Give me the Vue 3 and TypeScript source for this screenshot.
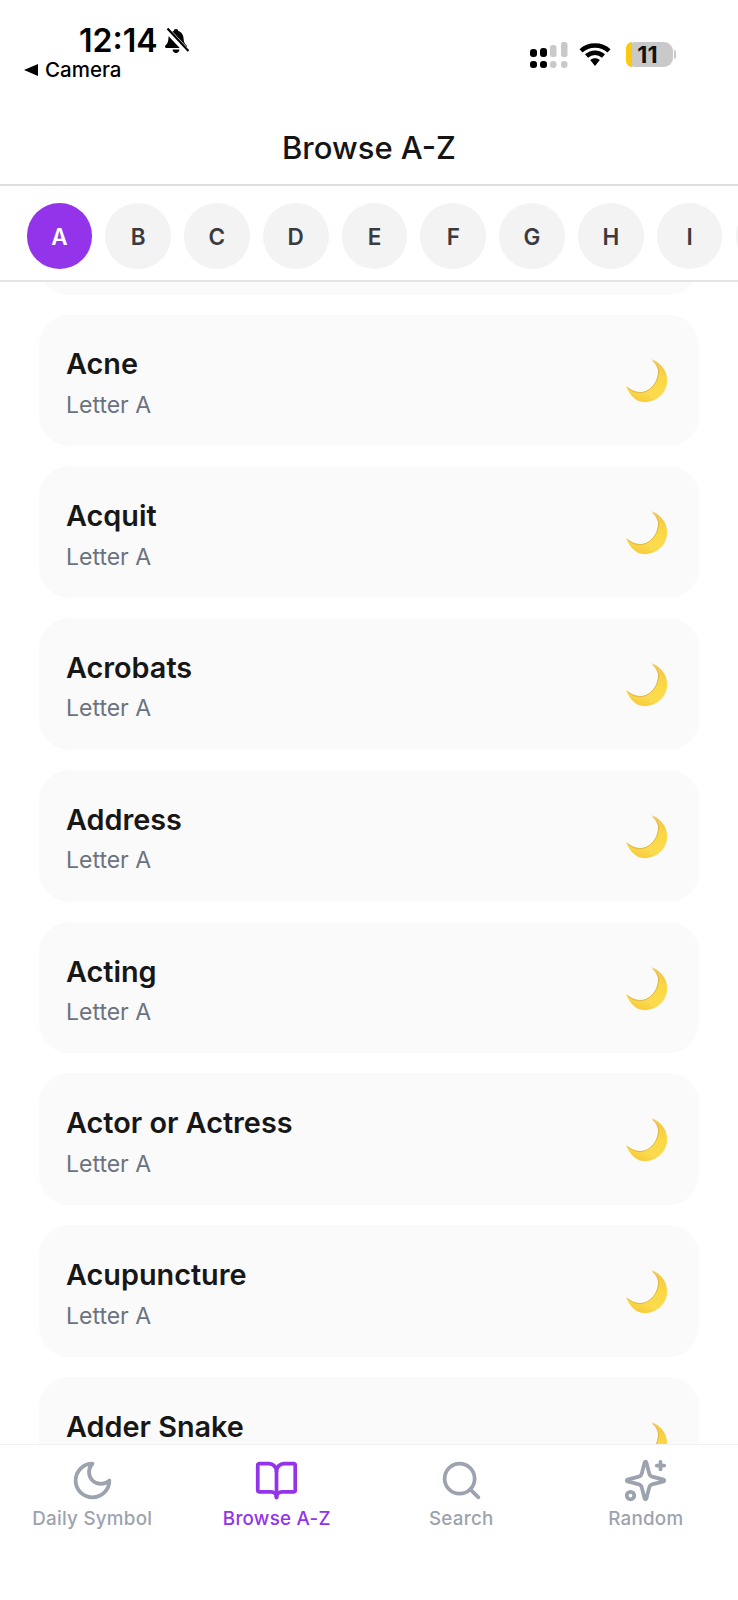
<script setup lang="ts">
const letters: string[] = ['A', 'B', 'C', 'D', 'E', 'F', 'G', 'H', 'I', 'J']
const items: string[] = ['Acne', 'Acquit', 'Acrobats', 'Address', 'Acting', 'Actor or Actress', 'Acupuncture', 'Adder Snake']
</script>

<template>
  <div class="phone">
    <header class="status">
      <div class="status-left">
        <div class="time-row">
          <span class="time">12:14</span>
          <svg class="bell" viewBox="0 0 25 27" aria-hidden="true">
            <path d="M12 1c1.300 0 2.200.9 2.300 2.100C18 4.200 19.400 7.500 19.600 11c.2 3 1 4.600 3 6.600.8.9.3 2.400-1 2.400H2.400c-1.300 0-1.800-1.500-1-2.400 2-2 2.800-3.600 3-6.600C4.600 7.500 6 4.200 9.700 3.100 9.800 1.900 10.700 1 12 1Z" />
            <path d="M8.500 21.500h7c-.2 2.200-1.700 3.500-3.500 3.500s-3.300-1.300-3.500-3.500Z" />
            <path class="bell-gap" d="M2 1 24.500 25" />
            <path class="bell-slash" d="M3.500.5 24.500 23" />
          </svg>
        </div>
        <div class="back-row">
          <svg class="back" viewBox="0 0 14 12" aria-hidden="true"><path d="M0 6 14 0v12Z" /></svg>
          <span>Camera</span>
        </div>
      </div>
      <div class="status-right">
        <svg class="cell" viewBox="0 0 38 26" aria-hidden="true">
          <rect x="0" y="7" width="7" height="8" rx="3" fill="#000" />
          <rect x="10" y="6" width="7" height="9" rx="3" fill="#000" />
          <rect x="20" y="3" width="6.500" height="12" rx="2.500" fill="#c9c9c9" />
          <rect x="31" y="0" width="6.500" height="15" rx="2.500" fill="#c9c9c9" />
          <rect x="0" y="19" width="7" height="7" rx="3" fill="#000" />
          <rect x="10" y="19" width="7" height="7" rx="3" fill="#000" />
          <rect x="20" y="19" width="6.500" height="7" rx="3" fill="#c9c9c9" />
          <rect x="31" y="19" width="6.500" height="7" rx="3" fill="#c9c9c9" />
        </svg>
        <svg class="wifi" viewBox="0 0 32 24" aria-hidden="true">
          <path d="M2 8.800C9.700 1.800 22.300 1.800 30 8.800" />
          <path d="M7.500 14C12.500 9.500 19.500 9.500 24.500 14" />
          <path class="wifi-dot" d="M11.200 18c2.800-2.400 6.800-2.400 9.600 0L16 24Z" />
        </svg>
        <div class="battery">
          <div class="battery-body">
            <span class="battery-fill"></span>
            <span class="battery-num">11</span>
          </div>
          <span class="battery-nub"></span>
        </div>
      </div>
    </header>

    <div class="nav-title">Browse A-Z</div>

    <nav class="letters">
      <button v-for="(l, i) in letters" :key="l" class="letter" :class="{ active: i === 0 }">{{ l }}</button>
    </nav>

    <main class="list">
      <div class="list-inner">
        <div class="card card-partial"></div>
        <article v-for="name in items" :key="name" class="card">
          <div class="card-text">
            <div class="card-title">{{ name }}</div>
            <div class="card-sub">Letter A</div>
          </div>
          <svg class="moon" viewBox="0 0 44 46" aria-hidden="true">
            <defs>
              <linearGradient id="moonFill" x1="0.75" y1="0" x2="0.35" y2="1">
                <stop offset="0" stop-color="#f0c64a" />
                <stop offset="0.35" stop-color="#fbd743" />
                <stop offset="0.75" stop-color="#fbdc4f" />
                <stop offset="1" stop-color="#f6cb3a" />
              </linearGradient>
            </defs>
            <g transform="translate(1 1.600)">
              <path fill="url(#moonFill)" d="M25.500.5C36.500 5 42 14 41 24 40 35.500 29 44.500 17 43.500 10 43 4 37.500 0 27.500 6 32.500 12 34.500 18 33 26 30.500 32.500 22 32 12 31.500 7.500 29 3.500 25.500.5Z" />
              <path fill="none" stroke="#c99a45" stroke-width="1" opacity=".55" d="M26.500 2C30.500 6 32.300 9 32.500 12.500 33 22 26 31 18 33.500 12 35 6.500 33 1.500 29" />
            </g>
          </svg>
        </article>
      </div>
    </main>

    <footer class="tabs">
      <div class="tab">
        <svg class="tab-icon" viewBox="0 0 24 24"><path d="M12 3a6 6 0 0 0 9 9 9 9 0 1 1-9-9Z" /></svg>
        <span>Daily Symbol</span>
      </div>
      <div class="tab current">
        <svg class="tab-icon" viewBox="0 0 24 24"><path d="M12 7v14" /><path d="M3 18a1 1 0 0 1-1-1V4a1 1 0 0 1 1-1h5a4 4 0 0 1 4 4 4 4 0 0 1 4-4h5a1 1 0 0 1 1 1v13a1 1 0 0 1-1 1h-6a3 3 0 0 0-3 3 3 3 0 0 0-3-3z" /></svg>
        <span>Browse A-Z</span>
      </div>
      <div class="tab">
        <svg class="tab-icon" viewBox="0 0 24 24"><circle cx="11" cy="11" r="8" /><path d="m21 21-4.300-4.300" /></svg>
        <span>Search</span>
      </div>
      <div class="tab">
        <svg class="tab-icon" viewBox="0 0 24 24"><path d="M9.937 15.500A2 2 0 0 0 8.500 14.063l-6.135-1.582a.5.5 0 0 1 0-.962L8.500 9.936A2 2 0 0 0 9.937 8.500l1.582-6.135a.5.5 0 0 1 .963 0L14.063 8.500A2 2 0 0 0 15.500 9.937l6.135 1.581a.5.5 0 0 1 0 .964L15.500 14.063a2 2 0 0 0-1.437 1.437l-1.582 6.135a.5.5 0 0 1-.963 0z" /><path d="M20 2v4" /><path d="M22 4h-4" /><circle cx="4" cy="20" r="2" /></svg>
        <span>Random</span>
      </div>
    </footer>
  </div>
</template>

<style>
html, body { margin: 0; background: #fff; }
</style>

<style scoped>
.phone {
  width: 738px;
  height: 1600px;
  display: flex;
  flex-direction: column;
  overflow: hidden;
  background: #fff;
  font-family: Inter, "Liberation Sans", sans-serif;
  color: #111;
}
.status {
  height: 118px;
  flex: none;
  box-sizing: border-box;
  display: flex;
  justify-content: space-between;
  align-items: flex-start;
  padding: 26px 62px 0 24px;
  color: #000;
}
.status-left { display: flex; flex-direction: column; }
.time-row { display: flex; align-items: center; gap: 6px; padding-left: 55px; height: 30px; }
.time { font-size: 32px; font-weight: 600; line-height: 30px; }
.bell { width: 25px; height: 27px; fill: #000; }
.bell-gap { stroke: #fff; stroke-width: 6; fill: none; }
.bell-slash { stroke: #000; stroke-width: 2.200; fill: none; }
.back-row { display: flex; align-items: center; gap: 7px; height: 28px; font-size: 20.500px; font-weight: 500; line-height: 28px; }
.back { width: 14px; height: 12px; fill: #000; }
.status-right { display: flex; align-items: flex-start; padding-top: 16px; }
.cell { width: 38px; height: 26px; margin-right: 11px; }
.wifi { width: 32px; height: 24px; margin-right: 15px; fill: none; stroke: #000; stroke-width: 4.500; stroke-linecap: butt; }
.wifi-dot { fill: #000; stroke: none; }
.battery { display: flex; align-items: center; height: 25px; }
.battery-body {
  position: relative;
  width: 47px;
  height: 25px;
  border-radius: 9px;
  background: #c9c9c9;
  display: flex;
  align-items: center;
  justify-content: center;
}
.battery-fill { position: absolute; left: 0; top: 0; bottom: 0; width: 6px; border-radius: 9px 0 0 9px; background: #fdc90f; }
.battery-num { position: relative; font-size: 23.500px; font-weight: 700; line-height: 25px; color: #111; left: -2px; }
.battery-nub { width: 2px; height: 9px; margin-left: 1px; border-radius: 0 2px 2px 0; background: #c9c9c9; }
.nav-title {
  height: 66px;
  flex: none;
  text-align: center;
  font-size: 31px;
  font-weight: 500;
  line-height: 60px;
  color: #151515;
  border-bottom: 2px solid #dedede;
}
.letters {
  height: 96px;
  flex: none;
  box-sizing: border-box;
  display: flex;
  align-items: center;
  gap: 13.100px;
  padding: 6px 0 0 26.500px;
  border-bottom: 2px solid #e4e4e4;
  overflow: hidden;
}
.letter {
  flex: none;
  width: 65.700px;
  height: 65.700px;
  padding: 0;
  border: 0;
  border-radius: 50%;
  background: #f3f3f4;
  color: #3a3a3f;
  font-family: Inter, "Liberation Sans", sans-serif;
  font-size: 22.500px;
  font-weight: 600;
}
.letter.active { background: #9333ea; color: #fff; }
.list { flex: 1; min-height: 0; overflow: hidden; }
.list-inner {
  display: flex;
  flex-direction: column;
  gap: 20px;
  margin-top: -119.300px;
  padding: 0 39px;
}
.card {
  flex: none;
  height: 131.800px;
  box-sizing: border-box;
  display: flex;
  align-items: center;
  justify-content: space-between;
  padding: 0 30px 0 27px;
  border-radius: 30px;
  background: #fafafa;
}
.card-text { display: flex; flex-direction: column; gap: 4.500px; padding-top: 4.500px; }
.card-title { font-size: 28.800px; font-weight: 600; line-height: 40px; color: #171717; }
.card-sub { font-size: 23px; line-height: 32px; color: #6b7280; }
.moon { width: 44px; height: 46px; flex: none; }
.tabs {
  height: 156px;
  flex: none;
  box-sizing: border-box;
  display: grid;
  grid-template-columns: repeat(4, 1fr);
  border-top: 1px solid #f0f0f1;
  padding-top: 13px;
  background: #fff;
}
.tab {
  display: flex;
  flex-direction: column;
  align-items: center;
  color: #9ca3af;
  font-size: 18.800px;
  font-weight: 500;
  line-height: 28px;
  letter-spacing: .25px;
}
.tab.current { color: #9333ea; }
.tab-icon {
  width: 45px;
  height: 45px;
  fill: none;
  stroke: currentColor;
  stroke-width: 2;
  stroke-linecap: round;
  stroke-linejoin: round;
  margin-bottom: 2px;
}
</style>
